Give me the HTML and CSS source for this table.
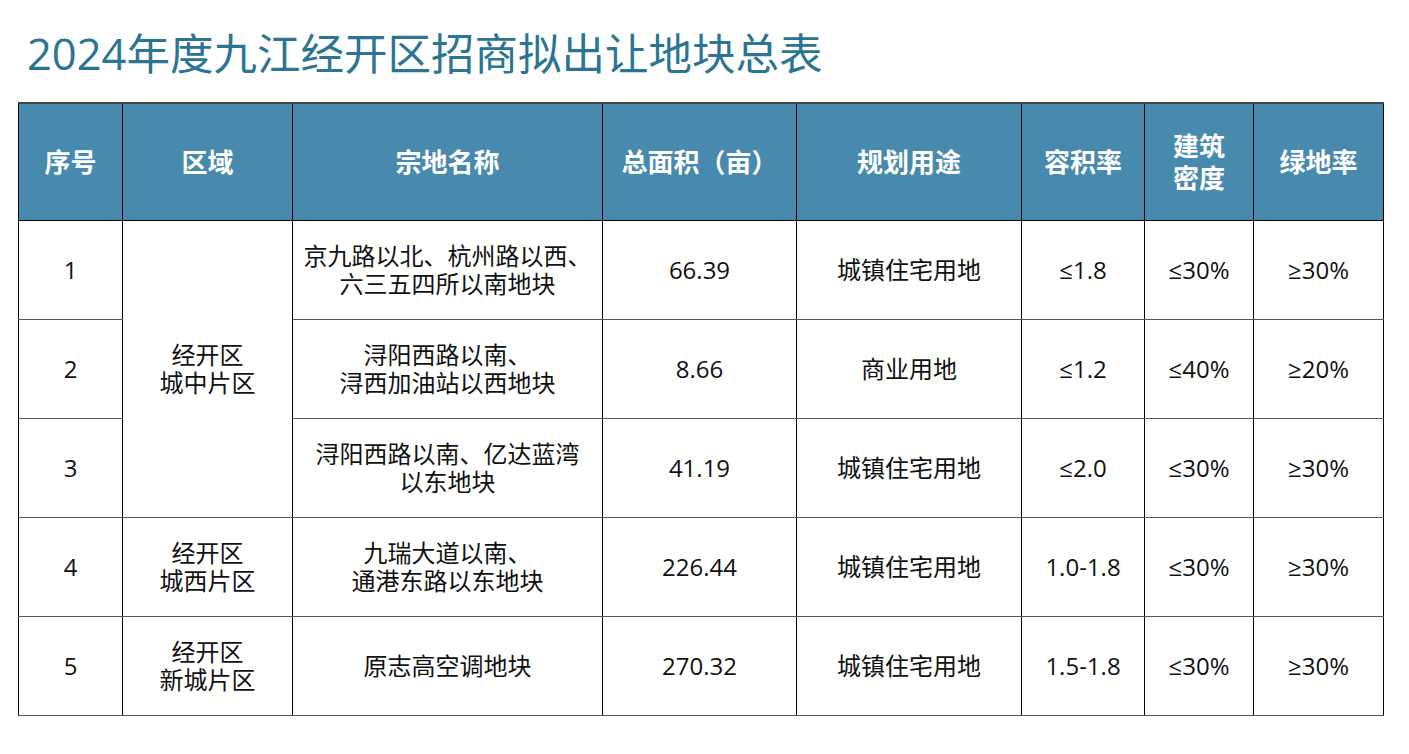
FILE: index.html
```html
<!DOCTYPE html>
<html lang="zh-CN">
<head>
<meta charset="utf-8">
<title>2024年度九江经开区招商拟出让地块总表</title>
<link rel="stylesheet" href="styles.css">
</head>
<body>
<h1 class="title">2024年度九江经开区招商拟出让地块总表</h1>
<table class="land">
  <colgroup>
    <col class="c-no"><col class="c-area"><col class="c-name"><col class="c-size"><col class="c-use"><col class="c-far"><col class="c-den"><col class="c-green">
  </colgroup>
  <thead>
    <tr>
      <th>序号</th>
      <th>区域</th>
      <th>宗地名称</th>
      <th>总面积（亩）</th>
      <th>规划用途</th>
      <th>容积率</th>
      <th>建筑<br>密度</th>
      <th>绿地率</th>
    </tr>
  </thead>
  <tbody>
    <tr>
      <td>1</td>
      <td rowspan="3">经开区<br>城中片区</td>
      <td>京九路以北、杭州路以西、<br>六三五四所以南地块</td>
      <td>66.39</td>
      <td>城镇住宅用地</td>
      <td>≤1.8</td>
      <td>≤30%</td>
      <td>≥30%</td>
    </tr>
    <tr>
      <td>2</td>
      <td>浔阳西路以南、<br>浔西加油站以西地块</td>
      <td>8.66</td>
      <td>商业用地</td>
      <td>≤1.2</td>
      <td>≤40%</td>
      <td>≥20%</td>
    </tr>
    <tr>
      <td>3</td>
      <td>浔阳西路以南、亿达蓝湾<br>以东地块</td>
      <td>41.19</td>
      <td>城镇住宅用地</td>
      <td>≤2.0</td>
      <td>≤30%</td>
      <td>≥30%</td>
    </tr>
    <tr>
      <td>4</td>
      <td>经开区<br>城西片区</td>
      <td>九瑞大道以南、<br>通港东路以东地块</td>
      <td>226.44</td>
      <td>城镇住宅用地</td>
      <td>1.0-1.8</td>
      <td>≤30%</td>
      <td>≥30%</td>
    </tr>
    <tr>
      <td>5</td>
      <td>经开区<br>新城片区</td>
      <td>原志高空调地块</td>
      <td>270.32</td>
      <td>城镇住宅用地</td>
      <td>1.5-1.8</td>
      <td>≤30%</td>
      <td>≥30%</td>
    </tr>
  </tbody>
</table>
</body>
</html>
```
FILE: styles.css
```css
html, body {
  margin: 0;
  padding: 0;
  background: #ffffff;
}
body {
  font-family: "Open Sans", "Noto Sans CJK SC", sans-serif;
  color: #111111;
}
.title {
  margin: 0;
  padding: 27px 0 0 27px;
  font-size: 43.5px;
  line-height: 53px;
  font-weight: 400;
  color: #2b7592;
}
.land {
  margin: 22px 0 0 18px;
  border-collapse: collapse;
  table-layout: fixed;
  width: 1366px;
}
.c-no { width: 104px; }
.c-area { width: 170px; }
.c-name { width: 310px; }
.c-size { width: 194px; }
.c-use { width: 225px; }
.c-far { width: 123px; }
.c-den { width: 109px; }
.c-green { width: 130px; }

.land th {
  background: #488aad;
  color: #ffffff;
  font-weight: 700;
  font-size: 26px;
  line-height: 32px;
  height: 116px;
  padding: 0;
  text-align: center;
  vertical-align: middle;
  border-left: 1px solid #000;
  border-right: 1px solid #000;
  border-top: 2px solid #444;
  border-bottom: 1px solid #000;
}
.land td {
  font-size: 24px;
  line-height: 28px;
  height: 98px;
  padding: 0;
  text-align: center;
  vertical-align: middle;
  border-left: 1px solid #000;
  border-right: 1px solid #000;
  border-top: 1px solid #555;
  border-bottom: 1px solid #555;
}
```
